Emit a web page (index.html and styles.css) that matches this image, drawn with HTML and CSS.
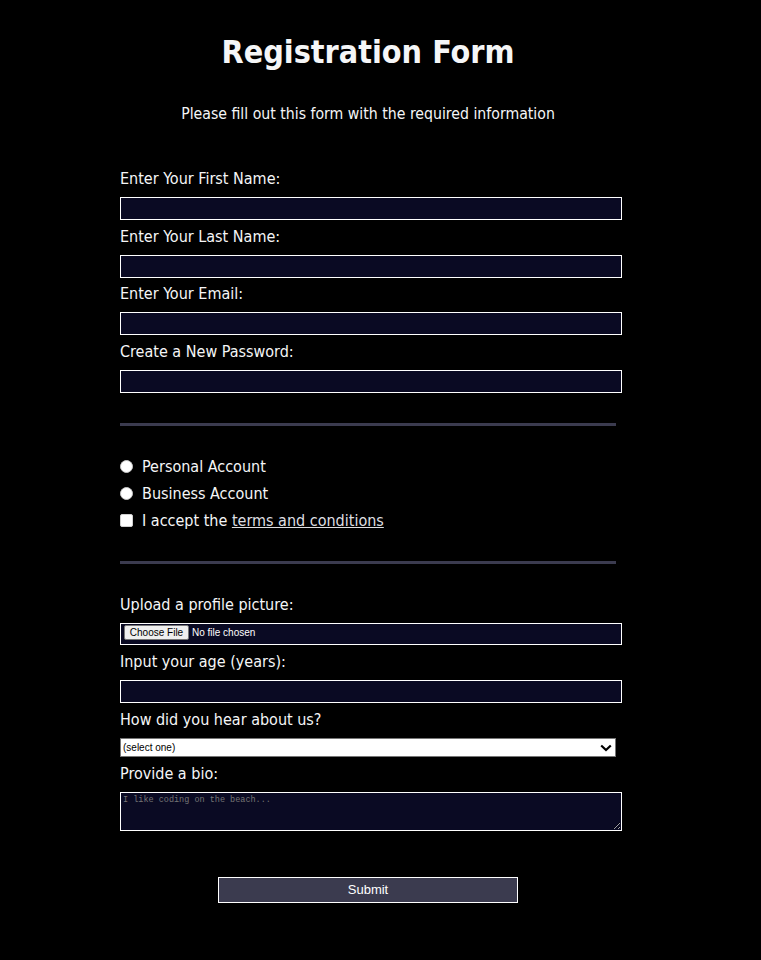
FILE: index.html
```html
<!DOCTYPE html>
<html lang="en">
<head>
<meta charset="utf-8">
<title>Registration Form</title>
<link rel="stylesheet" href="styles.css">
</head>
<body>
<main class="page">
  <h1 class="title">Registration Form</h1>
  <p class="intro">Please fill out this form with the required information</p>
  <form class="form" action="#" onsubmit="return false">
    <fieldset class="group group-info">
      <label class="field"><span class="field-label">Enter Your First Name:</span><input class="text-input" type="text"></label>
      <label class="field"><span class="field-label">Enter Your Last Name:</span><input class="text-input" type="text"></label>
      <label class="field"><span class="field-label">Enter Your Email:</span><input class="text-input" type="email"></label>
      <label class="field"><span class="field-label">Create a New Password:</span><input class="text-input" type="password"></label>
    </fieldset>
    <fieldset class="group group-account">
      <label class="choice"><input class="radio" type="radio" name="account">Personal Account</label>
      <label class="choice"><input class="radio" type="radio" name="account">Business Account</label>
      <label class="choice"><input class="checkbox" type="checkbox">I accept the&nbsp;<a class="terms" href="#">terms and conditions</a></label>
    </fieldset>
    <fieldset class="group group-extra">
      <label class="field"><span class="field-label">Upload a profile picture:</span><input class="file-input" type="file"></label>
      <label class="field field-age"><span class="field-label">Input your age (years):</span><input class="text-input" type="number" min="13" max="120"></label>
      <label class="field field-select"><span class="field-label">How did you hear about us?</span>
        <span class="select-wrap">
          <select class="select">
            <option value="">(select one)</option>
            <option>freeCodeCamp News</option>
            <option>freeCodeCamp YouTube Channel</option>
            <option>freeCodeCamp Forum</option>
            <option>Other</option>
          </select>
          <svg class="chevron" width="12" height="8" viewBox="0 0 12 8" aria-hidden="true"><path d="M1.2 1.5 L6 6 L10.8 1.5" fill="none" stroke="#000" stroke-width="2.2"/></svg>
        </span>
      </label>
      <label class="field"><span class="field-label">Provide a bio:</span><textarea class="bio" rows="3" cols="30" placeholder="I like coding on the beach..."></textarea></label>
    </fieldset>
    <input class="submit" type="submit" value="Submit">
  </form>
</main>
</body>
</html>
```
FILE: styles.css
```css
html, body {
  margin: 0;
  padding: 0;
  background: #000;
}

body {
  color: #f5f6f7;
  font-family: "DejaVu Sans Condensed", "DejaVu Sans", sans-serif;
  font-stretch: condensed;
  font-size: 16px;
}

.page {
  width: 736px;
  padding-bottom: 57px;
}

.title {
  margin: 33px 0 0;
  font-size: 32px;
  line-height: 39px;
  font-weight: bold;
  text-align: center;
}

.intro {
  margin: 32px 0 0;
  font-size: 15.7px;
  line-height: 19px;
  text-align: center;
}

.form {
  width: 496px;
  margin: 0 auto;
}

.group {
  margin: 0;
  padding: 0;
  border: none;
  min-width: 0;
  display: flex;
  flex-direction: column;
}

.group-info {
  padding: 46px 0 30px;
  gap: 6.67px;
  border-bottom: 3px solid #3b3b4f;
}

.group-account {
  padding: 31px 0 31px;
  gap: 8px;
  border-bottom: 3px solid #3b3b4f;
}

.group-extra {
  padding: 31px 0 0;
  gap: 7px;
}

.field {
  display: flex;
  flex-direction: column;
}

.field-label {
  line-height: 19px;
  height: 19px;
}

.text-input,
.file-input,
.bio {
  box-sizing: border-box;
  width: calc(100% + 6px);
  margin: 9px 0 0;
  background: #0a0a23;
  border: 1px solid #fff;
  color: #fff;
  border-radius: 0;
  outline: none;
}

.text-input {
  height: 23px;
  padding: 1px 2px;
  font: 13px "Liberation Sans", Arial, sans-serif;
}

.file-input {
  height: 22px;
  padding: 1px 2px 1px 3px;
  font: 10px "Liberation Sans", Arial, sans-serif;
  color: #fff;
}

.file-input::file-selector-button {
  font: 10px "Liberation Sans", Arial, sans-serif;
  color: #000;
  background: #efefef;
  border: 1px solid #767676;
  border-radius: 2px;
  height: 15px;
  width: 65px;
  padding: 0;
  margin: 0 3px 0 0;
}

.field-select .select-wrap {
  position: relative;
  display: block;
  margin-top: 9px;
}

.select {
  display: block;
  box-sizing: border-box;
  width: 100%;
  height: 19px;
  margin: 0;
  padding: 0 20px 0 2px;
  background: #fff;
  color: #000;
  border: 1px solid #767676;
  border-radius: 0;
  font: 10px "Liberation Sans", Arial, sans-serif;
  appearance: none;
  -webkit-appearance: none;
  outline: none;
}

.chevron {
  position: absolute;
  right: 4px;
  top: 6px;
  pointer-events: none;
}

.bio {
  height: 39px;
  padding: 2px 2px;
  font: 8.5px "Liberation Mono", "Courier New", monospace;
  resize: both;
  display: block;
}

.bio::placeholder {
  color: #757575;
}

.choice {
  display: flex;
  align-items: center;
  line-height: 19px;
  height: 19px;
}

.radio,
.checkbox {
  appearance: none;
  -webkit-appearance: none;
  box-sizing: border-box;
  width: 13px;
  height: 13px;
  margin: 1px 9px 0 0;
  background: #fff;
  border: 1px solid #c8c8c8;
  flex: none;
}

.radio {
  border-radius: 50%;
}

.checkbox {
  border-radius: 2px;
  border-color: #cfcfcf;
}

.terms {
  color: #dfdfe2;
  text-decoration: underline;
}

.submit {
  display: block;
  box-sizing: border-box;
  width: 300px;
  height: 26px;
  margin: 46px auto 0;
  padding: 0;
  background: #3b3b4f;
  border: 1px solid #fff;
  border-radius: 0;
  color: #fff;
  font: 13px "Liberation Sans", Arial, sans-serif;
}
```
